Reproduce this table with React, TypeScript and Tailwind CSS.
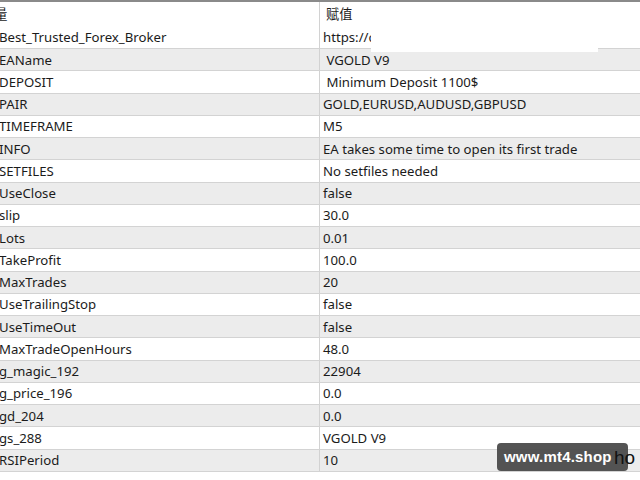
import React from "react";

const rows: [string, string][] = [
  ["EAName", " VGOLD V9"],
  ["DEPOSIT", " Minimum Deposit 1100$"],
  ["PAIR", "GOLD,EURUSD,AUDUSD,GBPUSD"],
  ["TIMEFRAME", "M5"],
  ["INFO", "EA takes some time to open its first trade"],
  ["SETFILES", "No setfiles needed"],
  ["UseClose", "false"],
  ["slip", "30.0"],
  ["Lots", "0.01"],
  ["TakeProfit", "100.0"],
  ["MaxTrades", "20"],
  ["UseTrailingStop", "false"],
  ["UseTimeOut", "false"],
  ["MaxTradeOpenHours", "48.0"],
  ["g_magic_192", "22904"],
  ["g_price_196", "0.0"],
  ["gd_204", "0.0"],
  ["gs_288", "VGOLD V9"],
  ["RSIPeriod", "10"],
];

const font = {
  fontFamily: '"Noto Sans", "Noto Sans CJK SC", sans-serif',
};

export default function App() {
  return (
    <div
      className="relative w-[640px] h-[480px] overflow-hidden bg-white text-[13.2px] text-[#1b1b1b]"
      style={font}
    >
      <div className="h-[2px] bg-[#8a8a8a]" />
      {/* header */}
      <div className="flex h-[24px] items-center bg-white">
        <div className="w-[319px] h-full flex items-center overflow-hidden pt-[2px]">
          <span className="ml-[-19px] whitespace-pre">变量</span>
        </div>
        <div className="w-px h-full bg-[#d2d2d2]" />
        <div className="flex-1 h-full flex items-center pl-[6px] pt-[2px]">赋值</div>
      </div>
      <div className="flex h-[23px] items-center bg-white border-b border-[#d3d3d3]">
        <div className="w-[319px] h-full flex items-center overflow-hidden pt-[2px]">
          <span className="ml-[-1px]">Best_Trusted_Forex_Broker</span>
        </div>
        <div className="w-px h-full bg-[#d2d2d2]" />
        <div className="flex-1 h-full flex items-center pl-[3px] pt-[2px]">https://c</div>
      </div>
      {rows.map(([k, v], i) => (
        <div
          key={k}
          className={
            "flex h-[22.26px] items-center border-b border-[#d3d3d3] " +
            (i % 2 === 0 ? "bg-[#ececec]" : "bg-white")
          }
        >
          <div className="w-[319px] h-full flex items-center overflow-hidden pt-[2px]">
            <span className="ml-[-1px] whitespace-pre">{k}</span>
          </div>
          <div className="w-px h-full bg-[#d2d2d2]" />
          <div className="flex-1 h-full flex items-center pl-[3px] pt-[2px] whitespace-pre">{v}</div>
        </div>
      ))}

      {/* redaction box */}
      <div className="absolute left-[371px] top-[28px] w-[227px] h-[24px] bg-white" />

      {/* watermark */}
      <div className="absolute left-[497px] top-[443px] w-[131px] h-[28px] rounded-[4px] bg-[#4b4b4b]/95 flex items-center pl-[7px]">
        <span
          className="text-white font-bold text-[15px] tracking-[0.2px]"
          style={{ fontFamily: '"Liberation Sans", Arial, sans-serif' }}
        >
          www.mt4.shop
        </span>
      </div>
      <span
        className="absolute left-[614px] top-[444px] text-[19px] text-[#111]"
        style={{ fontFamily: '"Liberation Sans", Arial, sans-serif' }}
      >
        ho
      </span>
    </div>
  );
}
